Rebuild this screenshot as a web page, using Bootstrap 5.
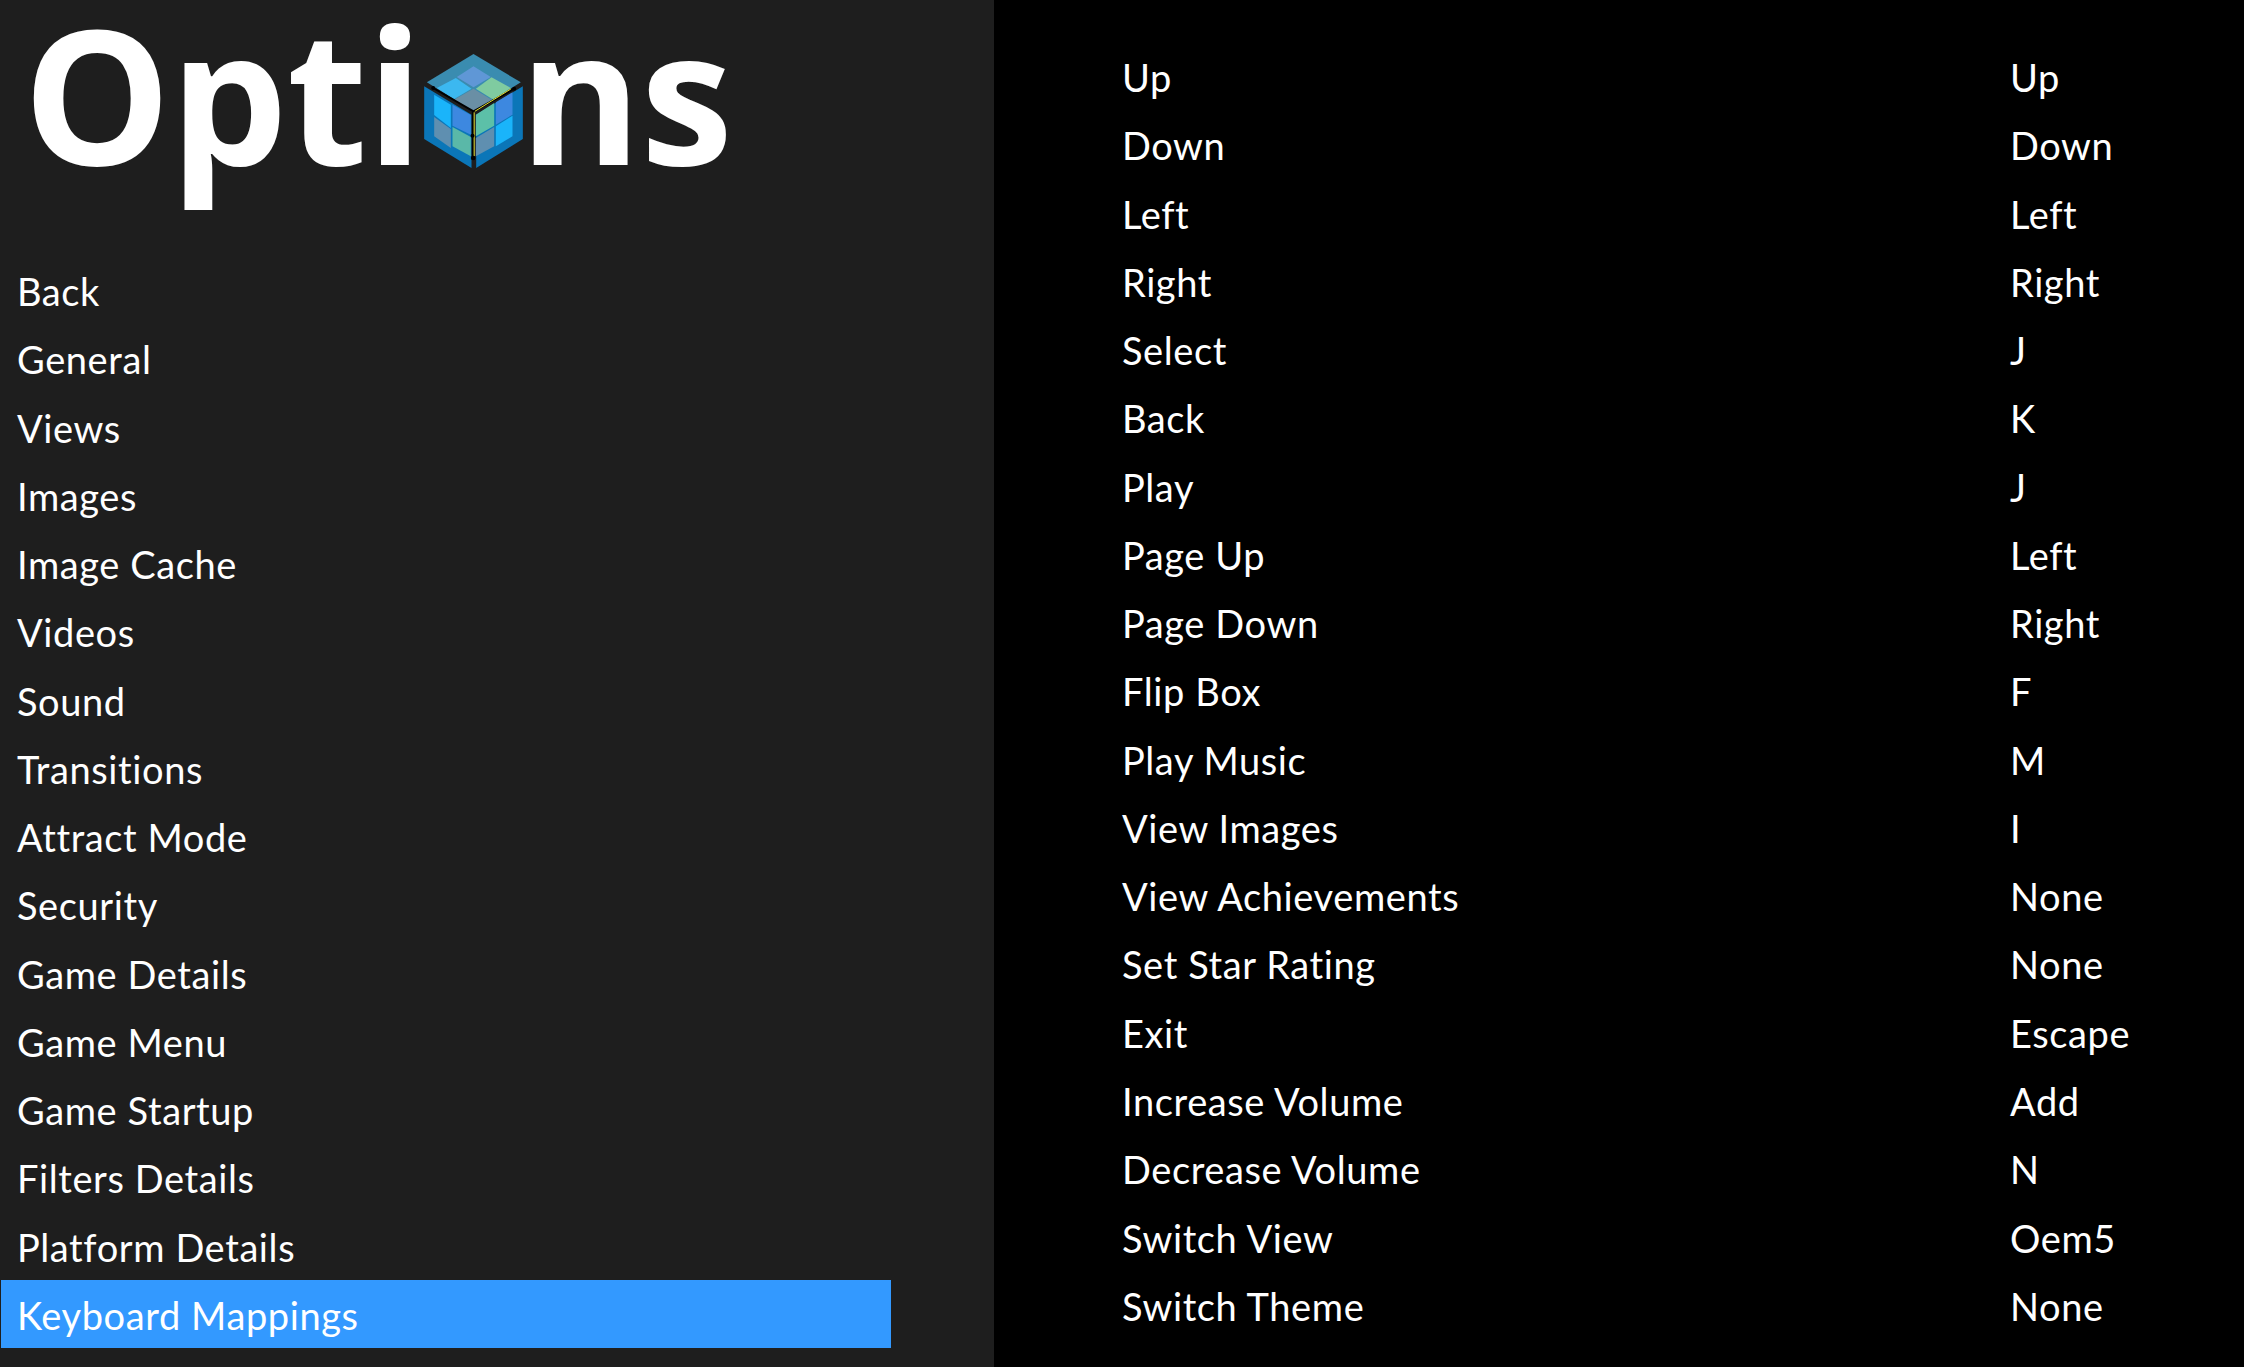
<!DOCTYPE html>
<html lang="en">
<head>
    <meta charset="UTF-8">
    <title>Options</title>
    <link href="https://cdn.jsdelivr.net/npm/bootstrap@5.3.0/dist/css/bootstrap.min.css" rel="stylesheet">
    <style>
        html, body {
            height: 100%;
        }

        body {
            background-color: #000;
            color: #fff;
            overflow: hidden;
            font-family: 'Lato', 'Liberation Sans', sans-serif;
            font-size: 38px;
            letter-spacing: .6px;
        }

        .options-side {
            width: 994px;
            height: 1367px;
            background-color: #1e1e1e;
            padding-left: 1px;
        }

        .options-title {
            height: 256px;
            margin: 0;
            padding-left: 22px;
            font-family: 'Open Sans', sans-serif;
            font-size: 186px;
            font-weight: 700;
            line-height: 1;
            letter-spacing: -1px;
        }

        .options-title span {
            line-height: 185px;
        }

        .cube-logo {
            width: 99px;
            height: 114px;
            margin: 54px -4px 0 2px;
        }

        .menu-list {
            width: 890px;
            --bs-list-group-bg: transparent;
            --bs-list-group-color: #fff;
            --bs-list-group-border-width: 0;
            --bs-list-group-border-radius: 0;
            --bs-list-group-active-bg: #3399ff;
            --bs-list-group-active-color: #fff;
        }

        .menu-list .list-group-item {
            height: 68.27px;
            padding: 0 0 0 16px;
            line-height: 70px;
        }

        .mapping-panel {
            padding: 43px 0 0 1122px;
            position: absolute;
            left: 0;
            top: 0;
        }

        .mapping-row {
            height: 68.27px;
            line-height: 68.27px;
        }

        .mapping-name {
            width: 888px;
        }
    </style>
</head>
<body>
    <div class="d-flex">
        <div class="options-side">
            <h1 class="options-title d-flex align-items-start">
                <span>Opti</span>
                <svg class="cube-logo flex-shrink-0" viewBox="70 43 296 342" aria-hidden="true">
                    <polygon points="218,43 360,128 218,215 78,128" fill="#3a8cb0"/>
                    <polygon points="218,80 270,112 218,143 168,112" fill="#5f97d6"/>
                    <polygon points="165,115 212,147 160,178 108,145" fill="#3cb8f0"/>
                    <polygon points="272,113 330,145 278,180 225,147" fill="#7fcba0"/>
                    <polygon points="218,147 275,182 218,213 160,180" fill="#6a8fa5"/>

                    <polygon points="70,140 212,225 212,385 70,298" fill="#0b76b8"/>
                    <polygon points="100,165 150,195 150,265 100,226" fill="#1ab4fa"/>
                    <polygon points="155,195 210,226 210,285 155,258" fill="#3d88e0"/>
                    <polygon points="100,232 150,268 150,325 100,290" fill="#5f8fb0"/>
                    <polygon points="155,262 210,292 210,350 155,320" fill="#5ab8a8"/>

                    <polygon points="366,140 366,298 226,385 226,225" fill="#0b76b8"/>
                    <polygon points="225,225 280,190 280,258 225,290" fill="#5cc0a8"/>
                    <polygon points="285,188 335,158 335,225 285,255" fill="#3d88e0"/>
                    <polygon points="225,295 280,262 280,320 225,350" fill="#5f8fb0"/>
                    <polygon points="285,260 335,228 335,290 285,320" fill="#1ab4fa"/>

                    <path d="M97 145 218 215 340 147M216 215V355" fill="none" stroke="#000" stroke-width="6"/>
                    <path d="M222 215 330 148M220 218V350" fill="none" stroke="#e8e030" stroke-width="3"/>
                    <circle cx="97" cy="145" r="6"/>
                    <circle cx="340" cy="147" r="6"/>
                    <circle cx="215" cy="288" r="6"/>
                    <circle cx="217" cy="355" r="7"/>
                </svg>
                <span>ns</span>
            </h1>
            <div class="list-group menu-list">
                <a class="list-group-item">Back</a>
                <a class="list-group-item">General</a>
                <a class="list-group-item">Views</a>
                <a class="list-group-item">Images</a>
                <a class="list-group-item">Image Cache</a>
                <a class="list-group-item">Videos</a>
                <a class="list-group-item">Sound</a>
                <a class="list-group-item">Transitions</a>
                <a class="list-group-item">Attract Mode</a>
                <a class="list-group-item">Security</a>
                <a class="list-group-item">Game Details</a>
                <a class="list-group-item">Game Menu</a>
                <a class="list-group-item">Game Startup</a>
                <a class="list-group-item">Filters Details</a>
                <a class="list-group-item">Platform Details</a>
                <a class="list-group-item active">Keyboard Mappings</a>
            </div>
        </div>
        <div class="mapping-panel">
            <div class="mapping-row d-flex"><div class="mapping-name">Up</div><div>Up</div></div>
            <div class="mapping-row d-flex"><div class="mapping-name">Down</div><div>Down</div></div>
            <div class="mapping-row d-flex"><div class="mapping-name">Left</div><div>Left</div></div>
            <div class="mapping-row d-flex"><div class="mapping-name">Right</div><div>Right</div></div>
            <div class="mapping-row d-flex"><div class="mapping-name">Select</div><div>J</div></div>
            <div class="mapping-row d-flex"><div class="mapping-name">Back</div><div>K</div></div>
            <div class="mapping-row d-flex"><div class="mapping-name">Play</div><div>J</div></div>
            <div class="mapping-row d-flex"><div class="mapping-name">Page Up</div><div>Left</div></div>
            <div class="mapping-row d-flex"><div class="mapping-name">Page Down</div><div>Right</div></div>
            <div class="mapping-row d-flex"><div class="mapping-name">Flip Box</div><div>F</div></div>
            <div class="mapping-row d-flex"><div class="mapping-name">Play Music</div><div>M</div></div>
            <div class="mapping-row d-flex"><div class="mapping-name">View Images</div><div>I</div></div>
            <div class="mapping-row d-flex"><div class="mapping-name">View Achievements</div><div>None</div></div>
            <div class="mapping-row d-flex"><div class="mapping-name">Set Star Rating</div><div>None</div></div>
            <div class="mapping-row d-flex"><div class="mapping-name">Exit</div><div>Escape</div></div>
            <div class="mapping-row d-flex"><div class="mapping-name">Increase Volume</div><div>Add</div></div>
            <div class="mapping-row d-flex"><div class="mapping-name">Decrease Volume</div><div>N</div></div>
            <div class="mapping-row d-flex"><div class="mapping-name">Switch View</div><div>Oem5</div></div>
            <div class="mapping-row d-flex"><div class="mapping-name">Switch Theme</div><div>None</div></div>
        </div>
    </div>
    <script src="https://cdn.jsdelivr.net/npm/bootstrap@5.3.0/dist/js/bootstrap.bundle.min.js"></script>
</body>
</html>
